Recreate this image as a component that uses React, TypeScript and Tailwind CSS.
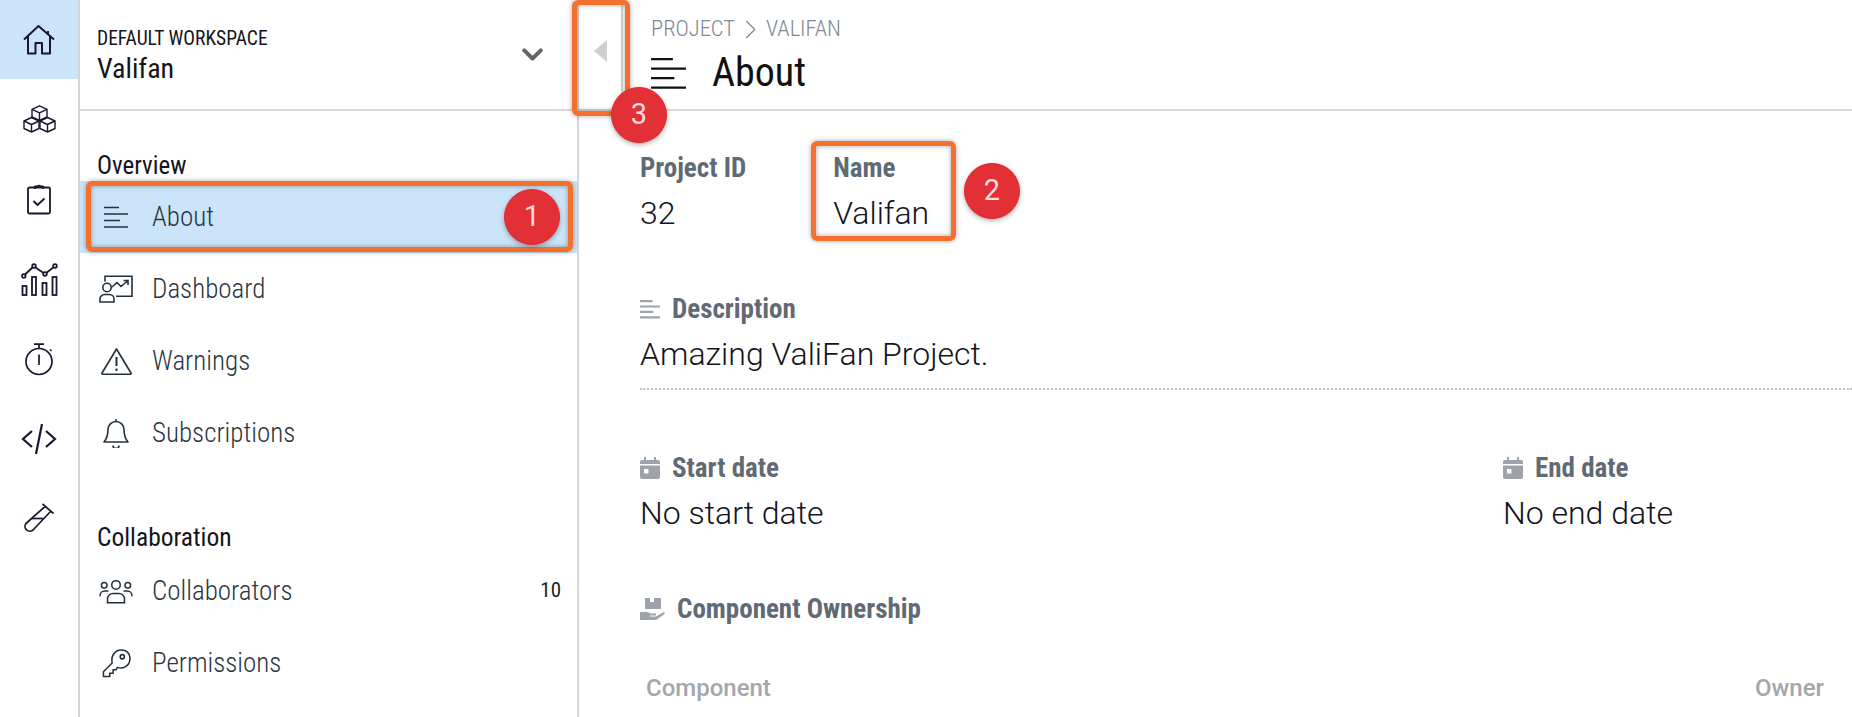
import React from 'react';
import { ChevronDown } from 'lucide-react';

const ink = '#1c1530';

const LinesIcon: React.FC<{ className?: string; color?: string; sw?: number }> = ({ className, color = '#22303c', sw = 1.4 }) => (
  <svg viewBox="0 0 24 22" className={className} fill="none" stroke={color} strokeWidth={sw}>
    <path d="M0 1.500h15M0 8h24M0 14.500h16M0 21h24" />
  </svg>
);

const HomeIcon = () => (
  <svg viewBox="0 0 32 30" className="w-[32px] h-[30px]" fill="none" stroke={ink} strokeWidth="2" strokeLinejoin="round">
    <path d="M1 14.500 15.500 1 31 14.500" />
    <path d="M5 11v17.500h7.500V18h6.500v10.500H27V11" />
    <path d="M25 6V9" />
  </svg>
);

const Cube = ({ x, y }: { x: number; y: number }) => (
  <g transform={`translate(${x} ${y})`}>
    <path d="M0 3.500 7.500 0 15 3.500v7.500L7.500 14.500 0 11z" />
    <path d="M0 3.500 7.500 7 15 3.500M7.500 7v7.500" />
  </g>
);

const BoxesIcon = () => (
  <svg viewBox="0 0 33 28" className="w-[33px] h-[28px]" fill="none" stroke={ink} strokeWidth="1.400" strokeLinejoin="round">
    <Cube x={9} y={0.8} />
    <Cube x={1} y={12.500} />
    <Cube x={17} y={12.500} />
  </svg>
);

const ClipboardIcon = () => (
  <svg viewBox="0 0 24 32" className="w-[24px] h-[32px]" fill="none" stroke={ink} strokeWidth="1.800" strokeLinejoin="round">
    <rect x="1" y="4.500" width="22" height="26" rx="1.500" />
    <path d="M8 6V3.500h2.500a1.800 1.800 0 0 1 3 0H16V6" />
    <path d="m6.500 18 4 4 7-6.500" />
  </svg>
);

const ChartIcon = () => (
  <svg viewBox="0 0 37 33" className="w-[37px] h-[33px]" fill="none" stroke={ink} strokeWidth="1.800">
    <circle cx="2.800" cy="13" r="1.800" />
    <circle cx="13" cy="3" r="1.800" />
    <circle cx="24" cy="11" r="1.800" />
    <circle cx="34" cy="3" r="1.800" />
    <path d="M4 11.500 11.500 4.500M14.500 4.500 22.500 10M25.500 9.800 32.500 4.200" />
    <rect x="1.500" y="23" width="4" height="9" />
    <rect x="11" y="14" width="4" height="18" />
    <rect x="21.500" y="20" width="4" height="12" />
    <rect x="31.500" y="14" width="4" height="18" />
  </svg>
);

const TimerIcon = () => (
  <svg viewBox="0 0 30 33" className="w-[30px] h-[33px]" fill="none" stroke={ink} strokeWidth="1.700">
    <circle cx="15" cy="18.500" r="13" />
    <path d="M10 1.200h10M15 1.200V5M15 11.500V22" />
    <path d="M26 6.500l1.500 1.500" />
  </svg>
);

const CodeIcon = () => (
  <svg viewBox="0 0 36 32" className="w-[36px] h-[32px]" fill="none" stroke={ink} strokeWidth="2.200">
    <path d="M11 8 2 16l9 8M25 8l9 8-9 8M21 1l-6 30" />
  </svg>
);

const TubeIcon = () => (
  <svg viewBox="0 0 32 32" className="w-[32px] h-[32px]" fill="none" stroke={ink} strokeWidth="1.700" strokeLinejoin="round">
    <path d="M19.500 1l11 9.500M28 8 10 27a4.800 4.800 0 0 1-7-6.500L22 3.500" />
    <path d="M9 15.500h11" />
  </svg>
);

const DashboardIcon = () => (
  <svg viewBox="0 0 34 28" className="w-[34px] h-[28px]" fill="none" stroke="#22303c" strokeWidth="1.600">
    <path d="M6 6.500V1.200h27v20H17" />
    <circle cx="8" cy="12.500" r="4.200" />
    <path d="M1 27v-3a4.500 4.500 0 0 1 4.500-4.500h5a4.500 4.500 0 0 1 4.500 4.500v3z" />
    <path d="m13 12 5-4.500 4 4 6.500-5.500M24.500 5.500H29V10" />
  </svg>
);

const WarningIcon = () => (
  <svg viewBox="0 0 31 27" className="w-[31px] h-[27px]" fill="none" stroke="#22303c" strokeWidth="1.600" strokeLinejoin="round">
    <path d="M15.500 1 30 25a.8.800 0 0 1-.7 1.200H1.700A.8.800 0 0 1 1 25z" />
    <path d="M15.500 9v9M15.500 20.500v2.500" strokeWidth="2" />
  </svg>
);

const BellIcon = () => (
  <svg viewBox="0 0 26 30" className="w-[26px] h-[30px]" fill="none" stroke="#22303c" strokeWidth="1.600" strokeLinejoin="round">
    <path d="M13 3.500a8 8 0 0 0-8 8c0 6-1 9-4 12.500h24c-3-3.500-4-6.500-4-12.500a8 8 0 0 0-8-8zM13 1v2.500M10 27.500a3 3 0 0 0 6 0" />
  </svg>
);

const UsersIcon = () => (
  <svg viewBox="0 0 36 26" className="w-[34px] h-[25px]" fill="none" stroke="#22303c" strokeWidth="1.600">
    <circle cx="18" cy="6" r="4.500" />
    <circle cx="5.500" cy="6.500" r="3" />
    <circle cx="30.500" cy="6.500" r="3" />
    <path d="M9 25v-4a6 6 0 0 1 6-6h6a6 6 0 0 1 6 6v4zM1 18c0-3 2-5.500 5-5.500h4M35 18c0-3-2-5.500-5-5.500h-4" />
  </svg>
);

const KeyIcon = () => (
  <svg viewBox="0 0 30 30" className="w-[29px] h-[29px]" fill="none" stroke="#22303c" strokeWidth="1.600" strokeLinejoin="round">
    <path d="M10.500 14.500 1.500 23.500V28.500h6.500V25h3.500v-3.500h3l1.500-2.500c5 2 13-1 13-9.500C29 4 25 1 20 1c-7 0-11 6.500-9.500 13.500z" />
    <circle cx="21" cy="8" r="2.200" />
  </svg>
);

const CalendarIcon = () => (
  <svg viewBox="0 0 20 22" className="w-[20px] h-[22px]" fill="#9ea3aa">
    <path d="M4 0h2v3h8V0h2v3h2a2 2 0 0 1 2 2v2H0V5a2 2 0 0 1 2-2h2z" />
    <path fillRule="evenodd" d="M0 8.500h20V20a2 2 0 0 1-2 2H2a2 2 0 0 1-2-2zM4 12v4.500h4.500V12z" />
  </svg>
);

const HandBoxIcon = () => (
  <svg viewBox="0 0 25 22" className="w-[25px] h-[22px]" fill="#9ea3aa">
    <path d="M5 0h5v4h4V0h7v11H5z" />
    <path d="M0 14h6c2 0 3 .5 4 1.500h5c1.500 0 1.500 2 0 2H10v1h6l7-4c1.500-.8 2.500 1 1 2l-8 5.500H0z" />
  </svg>
);

const railItems = [
  { icon: <BoxesIcon />, key: 'boxes' },
  { icon: <ClipboardIcon />, key: 'tasks' },
  { icon: <ChartIcon />, key: 'chart' },
  { icon: <TimerIcon />, key: 'timer' },
  { icon: <CodeIcon />, key: 'code' },
  { icon: <TubeIcon />, key: 'tube' },
];

const NavRow: React.FC<{ icon: React.ReactNode; label: string; active?: boolean; count?: number }> = ({ icon, label, active, count }) => (
  <div className={`h-[72px] flex items-center pl-[18px] pr-[16px] ${active ? 'bg-[#cce4f9]' : ''}`}>
    <span className="w-[36px] flex justify-center">{icon}</span>
    <span className="ml-[18px] flex-1 text-[27px] font-light text-[#2a3540] [font-stretch:75%]">{label}</span>
    {count !== undefined && <span className="text-[21px] text-[#222] [font-stretch:75%]">{count}</span>}
  </div>
);

const FieldLabel: React.FC<{ icon?: React.ReactNode; label: string }> = ({ icon, label }) => (
  <div className="flex items-center gap-[12px] h-[30px] text-[27px] font-bold text-[#5f6a75] [font-stretch:75%]">
    {icon}
    <span>{label}</span>
  </div>
);

const Value: React.FC<{ children: React.ReactNode }> = ({ children }) => (
  <div className="mt-[13px] mb-[1px] h-[34px] flex items-center text-[32px] font-light text-[#14141c]">{children}</div>
);

const Badge: React.FC<{ n: number; className: string }> = ({ n, className }) => (
  <div className={`absolute w-[56px] h-[56px] rounded-full bg-[#e23036] border border-[#e8262c] shadow-[0_2px_5px_rgba(0,0,0,0.3)] flex items-center justify-center text-[29px] text-[#fbdcdc] ${className}`}>
    {n}
  </div>
);

const Frame: React.FC<{ className: string }> = ({ className }) => (
  <div className={`absolute border-[5px] border-[#f4702c] rounded-[6px] shadow-[0_0_5px_rgba(0,0,0,0.35),inset_0_0_5px_rgba(0,0,0,0.35)] ${className}`} />
);

const App: React.FC = () => (
  <div className="relative w-[1852px] h-[717px] overflow-hidden bg-white flex font-['Roboto',sans-serif] text-[#14141c]">
    <aside className="w-[80px] shrink-0 border-r-2 border-[#d4d4d4] flex flex-col">
      <div className="h-[79px] flex items-center justify-center bg-[#cce4f9]">
        <HomeIcon />
      </div>
      {railItems.map(item => (
        <div key={item.key} className="h-[80px] flex items-center justify-center">
          {item.icon}
        </div>
      ))}
    </aside>

    <nav className="w-[499px] shrink-0 border-r-2 border-[#d4d4d4] flex flex-col">
      <div className="h-[111px] border-b-2 border-[#d9d9d9] flex items-center pl-[17px] pr-[28px]">
        <div className="flex-1 mt-[4px]">
          <div className="text-[19.500px] leading-[24px] [font-stretch:75%]">DEFAULT WORKSPACE</div>
          <div className="text-[28px] leading-[36px] [font-stretch:75%]">Valifan</div>
        </div>
        <ChevronDown className="w-[33px] h-[33px] text-[#666]" strokeWidth={3} />
      </div>
      <div className="h-[70px] flex items-end pl-[17px] text-[25px] leading-[34px] translate-y-[2px] [font-stretch:75%]">Overview</div>
      <NavRow icon={<LinesIcon className="w-[24px] h-[22px]" />} label="About" active />
      <NavRow icon={<DashboardIcon />} label="Dashboard" />
      <NavRow icon={<WarningIcon />} label="Warnings" />
      <NavRow icon={<BellIcon />} label="Subscriptions" />
      <div className="h-[86px] flex items-end pl-[17px] text-[25.500px] leading-[36px] [font-stretch:75%]">Collaboration</div>
      <NavRow icon={<UsersIcon />} label="Collaborators" count={10} />
      <NavRow icon={<KeyIcon />} label="Permissions" />
    </nav>

    <main className="flex-1 min-w-0 flex flex-col">
      <header className="h-[111px] shrink-0 border-b-2 border-[#d9d9d9] flex">
        <div className="w-[44px] shrink-0 border-r-2 border-[#d4d4d4] flex items-start justify-center pt-[40px]">
          <div className="w-0 h-0 border-y-[11px] border-y-transparent border-r-[13px] border-r-[#cfcfcf]" />
        </div>
        <div className="pl-[28px] pt-[15px]">
          <div className="flex items-center gap-[10px] text-[22.500px] font-light text-[#808890] [font-stretch:75%] h-[28px]">
            <span>PROJECT</span>
            <svg viewBox="0 0 11 20" className="w-[11px] h-[19px]" fill="none" stroke="#808890" strokeWidth="1.300"><path d="m1 1 9 9-9 9" /></svg>
            <span>VALIFAN</span>
          </div>
          <div className="flex items-center mt-[8px]">
            <LinesIcon className="w-[35px] h-[32px]" color="#111" sw={1.500} />
            <span className="ml-[26px] text-[40px] leading-[44px] text-[#111] [font-stretch:75%]">About</span>
          </div>
        </div>
      </header>

      <div className="pl-[61px] pt-[42px]">
        <div className="flex gap-[87px]">
          <div>
            <FieldLabel label="Project ID" />
            <Value>32</Value>
          </div>
          <div>
            <FieldLabel label="Name" />
            <Value>Valifan</Value>
          </div>
        </div>

        <div className="mt-[63px]">
          <FieldLabel icon={<LinesIcon className="w-[20px] h-[20px]" color="#9ea3aa" sw={2.600} />} label="Description" />
          <Value>Amazing ValiFan Project.</Value>
          <div className="mt-[17px] border-b-2 border-dotted border-[#c4c4c4]" />
        </div>

        <div className="mt-[63px] flex">
          <div className="w-[863px]">
            <FieldLabel icon={<CalendarIcon />} label="Start date" />
            <Value>No start date</Value>
          </div>
          <div>
            <FieldLabel icon={<CalendarIcon />} label="End date" />
            <Value>No end date</Value>
          </div>
        </div>

        <div className="mt-[63px]">
          <FieldLabel icon={<HandBoxIcon />} label="Component Ownership" />
        </div>

        <div className="mt-[46px] pl-[6px] pr-[28px] flex justify-between text-[24px] font-medium text-[#a2a7ae]">
          <span>Component</span>
          <span>Owner</span>
        </div>
      </div>
    </main>

    <Frame className="left-[86px] top-[181px] w-[487px] h-[71px]" />
    <Frame className="left-[572px] top-0 w-[58px] h-[116px]" />
    <Frame className="left-[811px] top-[141px] w-[145px] h-[100px]" />
    <Badge n={1} className="left-[504px] top-[189px]" />
    <Badge n={2} className="left-[964px] top-[163px]" />
    <Badge n={3} className="left-[611px] top-[87px]" />
  </div>
);

export default App;
